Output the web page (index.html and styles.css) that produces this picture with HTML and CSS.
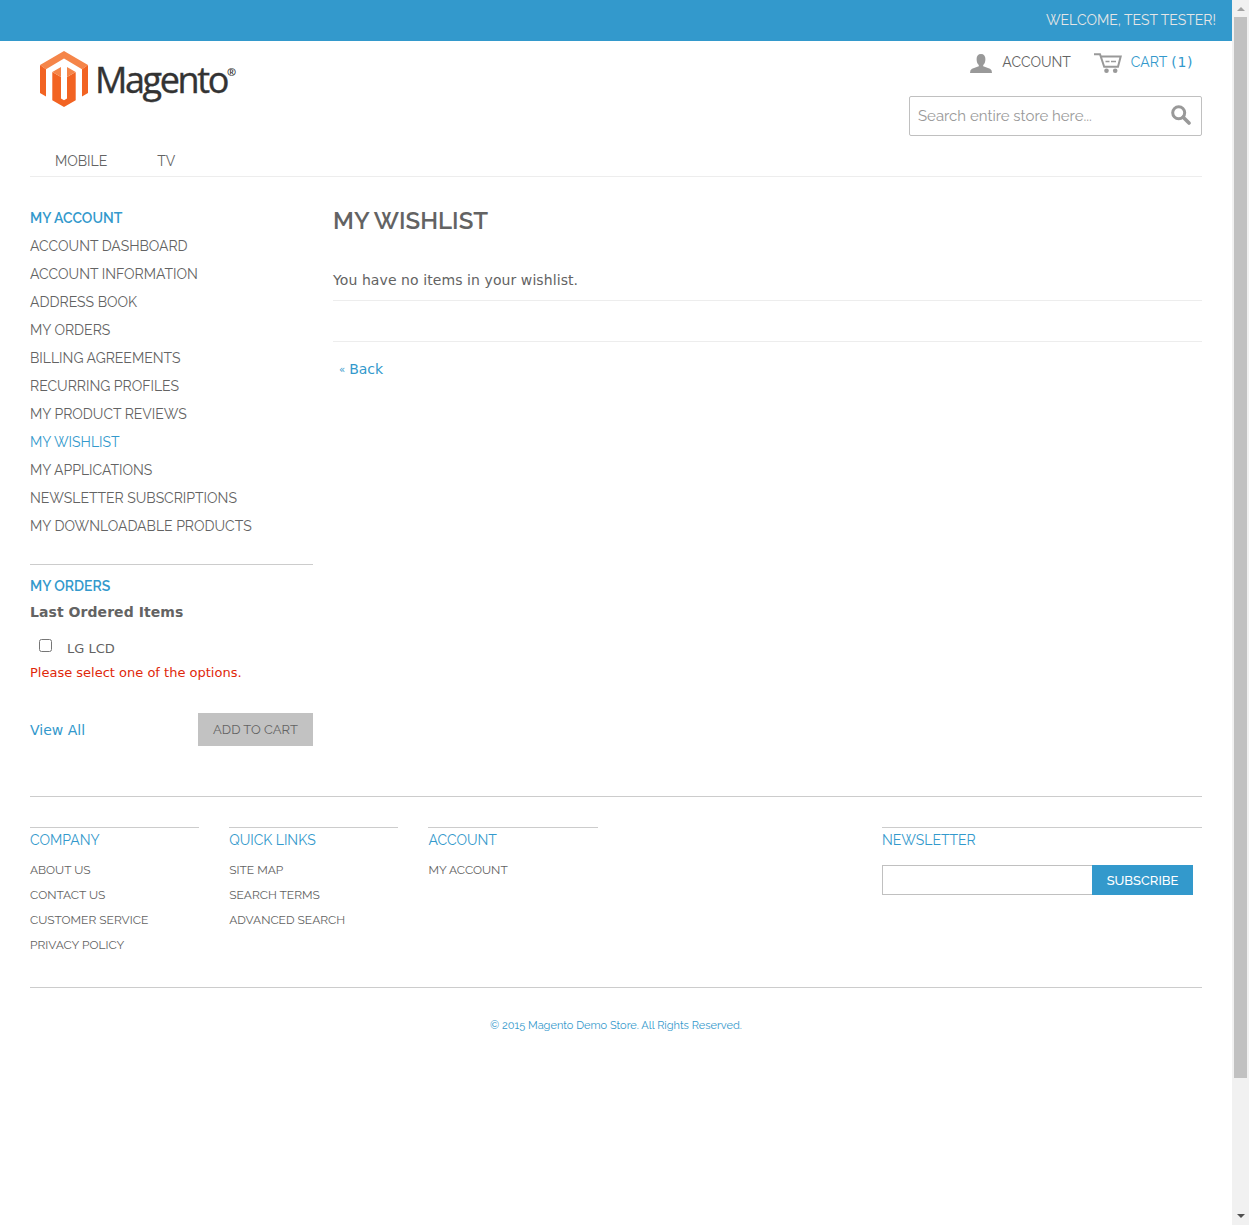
FILE: index.html
```html
<!DOCTYPE html>
<html lang="en">
<head>
<meta charset="utf-8">
<title>My Wishlist</title>
<link rel="stylesheet" href="styles.css">
</head>
<body>
<div class="window">
<div class="page">
  <div class="welcome-bar"><span>WELCOME, TEST TESTER!</span></div>
  <header class="header">
    <a class="logo">
      <svg class="logo-mark" viewBox="0 0 48 56" width="48" height="56">
        <path fill="#f58549" d="M24 0 48 14 42 18.200 24 7.500 6 18.200 0 14Z"/>
        <path fill="#f26322" d="M0 14 6 18.200V45.500L0 42ZM48 14V42L42 45.500V18.200Z"/>
        <path fill="#f26322" d="M12.300 21 21 26V47.500L24 49.200 27 47.500V26L35.700 21V49.300L24 56 12.300 49.300Z"/>
        <path fill="#f58549" d="M12.300 21 21 16V26ZM35.700 21 27 16V26Z"/>
      </svg>
      <span class="logo-name">Magento</span><span class="logo-reg">®</span>
    </a>
    <div class="header-side">
      <div class="links">
        <svg class="icon-user" viewBox="0 0 22 19" width="22" height="19"><path fill="#999" d="M11 0C8 0 6.600 2 6.600 5c0 3 .8 5 2.200 6v1.300L2 14.700Q0 15.500 0 19H22Q22 15.500 20 14.700L13.200 12.300V11c1.400-1 2.200-3 2.200-6C15.400 2 14 0 11 0Z"/></svg>
        <span class="account-label">ACCOUNT</span>
        <svg class="icon-cart" viewBox="0 0 28 20" width="28" height="20"><g fill="none" stroke="#999" stroke-width="2"><path d="M0 1.200H6L10.200 13.800H24L26.700 3.500H7"/><path stroke-width="1.700" d="M11.500 8.500H15.500M17 8.500H22"/></g><circle cx="12.500" cy="17.700" r="2.300" fill="#999"/><circle cx="21.200" cy="17.700" r="2.300" fill="#999"/></svg>
        <span class="cart-label">CART</span><span class="cart-count">(1)</span>
      </div>
      <div class="search">
        <span>Search entire store here...</span>
        <svg viewBox="0 0 20 20" width="20" height="20" fill="none" stroke="#999"><circle cx="7.700" cy="7.700" r="6" stroke-width="3"/><path d="M12.200 12.200 18 18" stroke-width="3.600" stroke-linecap="round"/></svg>
      </div>
    </div>
  </header>
  <nav class="nav"><a>MOBILE</a><a>TV</a></nav>
  <div class="columns">
    <aside class="sidebar">
      <h2 class="block-title">MY ACCOUNT</h2>
      <ul class="account-menu">
        <li>ACCOUNT DASHBOARD</li>
        <li>ACCOUNT INFORMATION</li>
        <li>ADDRESS BOOK</li>
        <li>MY ORDERS</li>
        <li>BILLING AGREEMENTS</li>
        <li>RECURRING PROFILES</li>
        <li>MY PRODUCT REVIEWS</li>
        <li class="current">MY WISHLIST</li>
        <li>MY APPLICATIONS</li>
        <li>NEWSLETTER SUBSCRIPTIONS</li>
        <li>MY DOWNLOADABLE PRODUCTS</li>
      </ul>
      <section class="orders">
        <h2 class="block-title">MY ORDERS</h2>
        <h3>Last Ordered Items</h3>
        <label class="item"><input type="checkbox"><span>LG LCD</span></label>
        <p class="error">Please select one of the options.</p>
        <div class="actions"><a>View All</a><button class="add">ADD TO CART</button></div>
      </section>
    </aside>
    <main class="main">
      <h1>MY WISHLIST</h1>
      <p class="empty">You have no items in your wishlist.</p>
      <div class="buttons"></div>
      <a class="back"><small>«</small><span>Back</span></a>
    </main>
  </div>
  <footer class="footer">
    <div class="footer-links">
      <section><h4>COMPANY</h4><ul><li>ABOUT US</li><li>CONTACT US</li><li>CUSTOMER SERVICE</li><li>PRIVACY POLICY</li></ul></section>
      <section><h4>QUICK LINKS</h4><ul><li>SITE MAP</li><li>SEARCH TERMS</li><li>ADVANCED SEARCH</li></ul></section>
      <section><h4>ACCOUNT</h4><ul><li>MY ACCOUNT</li></ul></section>
      <section class="newsletter"><h4>NEWSLETTER</h4><div class="subscribe"><input type="text"><button>SUBSCRIBE</button></div></section>
    </div>
    <p class="copyright">© 2015 Magento Demo Store. All Rights Reserved.</p>
  </footer>
</div>
<div class="scrollbar"><i class="up"></i><i class="thumb"></i><i class="down"></i></div>
</div>
</body>
</html>
```
FILE: styles.css
```css
* { box-sizing: border-box; }
body { margin: 0; background: #fff; color: #636363; font: 14px/20px "Raleway", "Lato", sans-serif; }
h1, h2, h3, h4, p, ul { margin: 0; padding: 0; list-style: none; }
.window { display: flex; height: 1225px; overflow: hidden; }
.page { width: 1232px; flex: none; }

.welcome-bar { height: 41px; padding: 10px 16px 0; background: #39c; color: #e6e6e6; text-align: right; }
.header { display: flex; justify-content: space-between; height: 104px; padding: 0 30px; }
.logo { display: flex; padding: 10px 0 0 10px; color: #333; }
.logo-name { margin: 9px 0 0 7px; font: 500 36px/40px "Open Sans", sans-serif; letter-spacing: -2.4px; -webkit-text-stroke: .4px #333; }
.logo-reg { margin: 10px 0 0; font: bold 11px/22px "Open Sans", sans-serif; }
.header-side { width: 293px; }
.links { display: flex; height: 55px; padding: 11px 9px 0 0; justify-content: flex-end; align-items: flex-start; }
.icon-user { margin: 2px 10px 0 0; }
.icon-cart { margin: 1px 9px 0 23px; }
.cart-label, .cart-count { color: #39c; }
.cart-count { margin-left: 4px; font-family: Verdana, "DejaVu Sans", sans-serif; letter-spacing: .6px; }
.search { display: flex; justify-content: space-between; align-items: center; height: 40px; padding: 0 10px 0 8px; border: 1px solid #c0c0c0; border-radius: 2px; color: #999; font-size: 15px; }
.search svg { margin-bottom: 2px; }

.nav { display: flex; gap: 50px; height: 32px; margin: 0 30px; padding: 6px 25px 0; border-bottom: 1px solid #ededed; }
.columns { display: flex; gap: 20px; height: 619px; padding: 27px 30px 0; }
.sidebar { width: 283px; }
.block-title { color: #39c; font-size: 14px; line-height: 28px; font-weight: 600; }
.account-menu { line-height: 28px; }
.current { color: #39c; }
.orders { margin-top: 24px; padding-top: 7px; border-top: 1px solid #ccc; }
.orders h3 { font: bold 14px/24px Verdana, "DejaVu Sans", sans-serif; letter-spacing: .06px; }
.item { display: flex; margin-top: 15px; height: 24px; font: 13px/20px Verdana, "DejaVu Sans", sans-serif; }
.item input { width: 13px; height: 13px; margin: 0 15px 0 9px; }
.error { color: #df280a; font: 13px/20px Verdana, "DejaVu Sans", sans-serif; }
.actions { display: flex; justify-content: space-between; margin-top: 30px; color: #39c; font: 14px/34px Verdana, "DejaVu Sans", sans-serif; }
.add { width: 115px; height: 33px; padding: 0; border: 0; background: #c2c2c2; color: #636363; font: 13px/33px "Raleway", "Lato", sans-serif; }
.main { flex: 1; }
.main h1 { height: 60px; font-size: 24px; line-height: 34px; font-weight: 600; }
.empty { height: 37px; padding-top: 6px; border-bottom: 1px solid #ededed; font: 14px/20px Verdana, "DejaVu Sans", sans-serif; letter-spacing: .08px; }
.buttons { height: 41px; border-bottom: 1px solid #ededed; }
.back { display: flex; gap: 4px; margin: 17px 0 0 6px; color: #39c; font: 14px/20px Verdana, "DejaVu Sans", sans-serif; }
.back small { font-size: 10px; line-height: 22px; }

.footer { margin: 0 30px; border-top: 1px solid #ccc; }
.footer-links { display: flex; gap: 30px; height: 191px; padding-top: 30px; border-bottom: 1px solid #ccc; }
.footer-links section { width: 169.2px; }
.footer-links .newsletter { width: 320px; margin-left: auto; }
.footer h4 { padding-top: 2px; border-top: 1px solid #ccc; color: #39c; font-size: 14px; line-height: 20px; font-weight: 400; }
.footer li { font-size: 12px; line-height: 25px; }
.footer ul { padding-top: 8px; }
.subscribe { display: flex; margin-top: 15px; }
.subscribe input { width: 210px; height: 30px; border: 1px solid #c0c0c0; border-right: 0; }
.subscribe button { width: 101px; height: 30px; padding: 2px 0 0; border: 0; background: #39c; color: #fff; font: 500 13px/28px "Raleway", "Lato", sans-serif; }
.copyright { padding-top: 28px; color: #39c; text-align: center; font-size: 11px; }

.scrollbar { display: flex; flex-direction: column; align-items: center; width: 17px; height: 1225px; background: #f1f1f1; }
.up, .down { border: 4px solid transparent; }
.up { height: 4px; margin: 7px 0 6px; border-top: 0; border-bottom-color: #a3a3a3; }
.thumb { width: 13px; height: 1061px; background: #c1c1c1; }
.down { margin-top: auto; margin-bottom: 7px; border-bottom: 0; border-top-color: #505050; }
```
